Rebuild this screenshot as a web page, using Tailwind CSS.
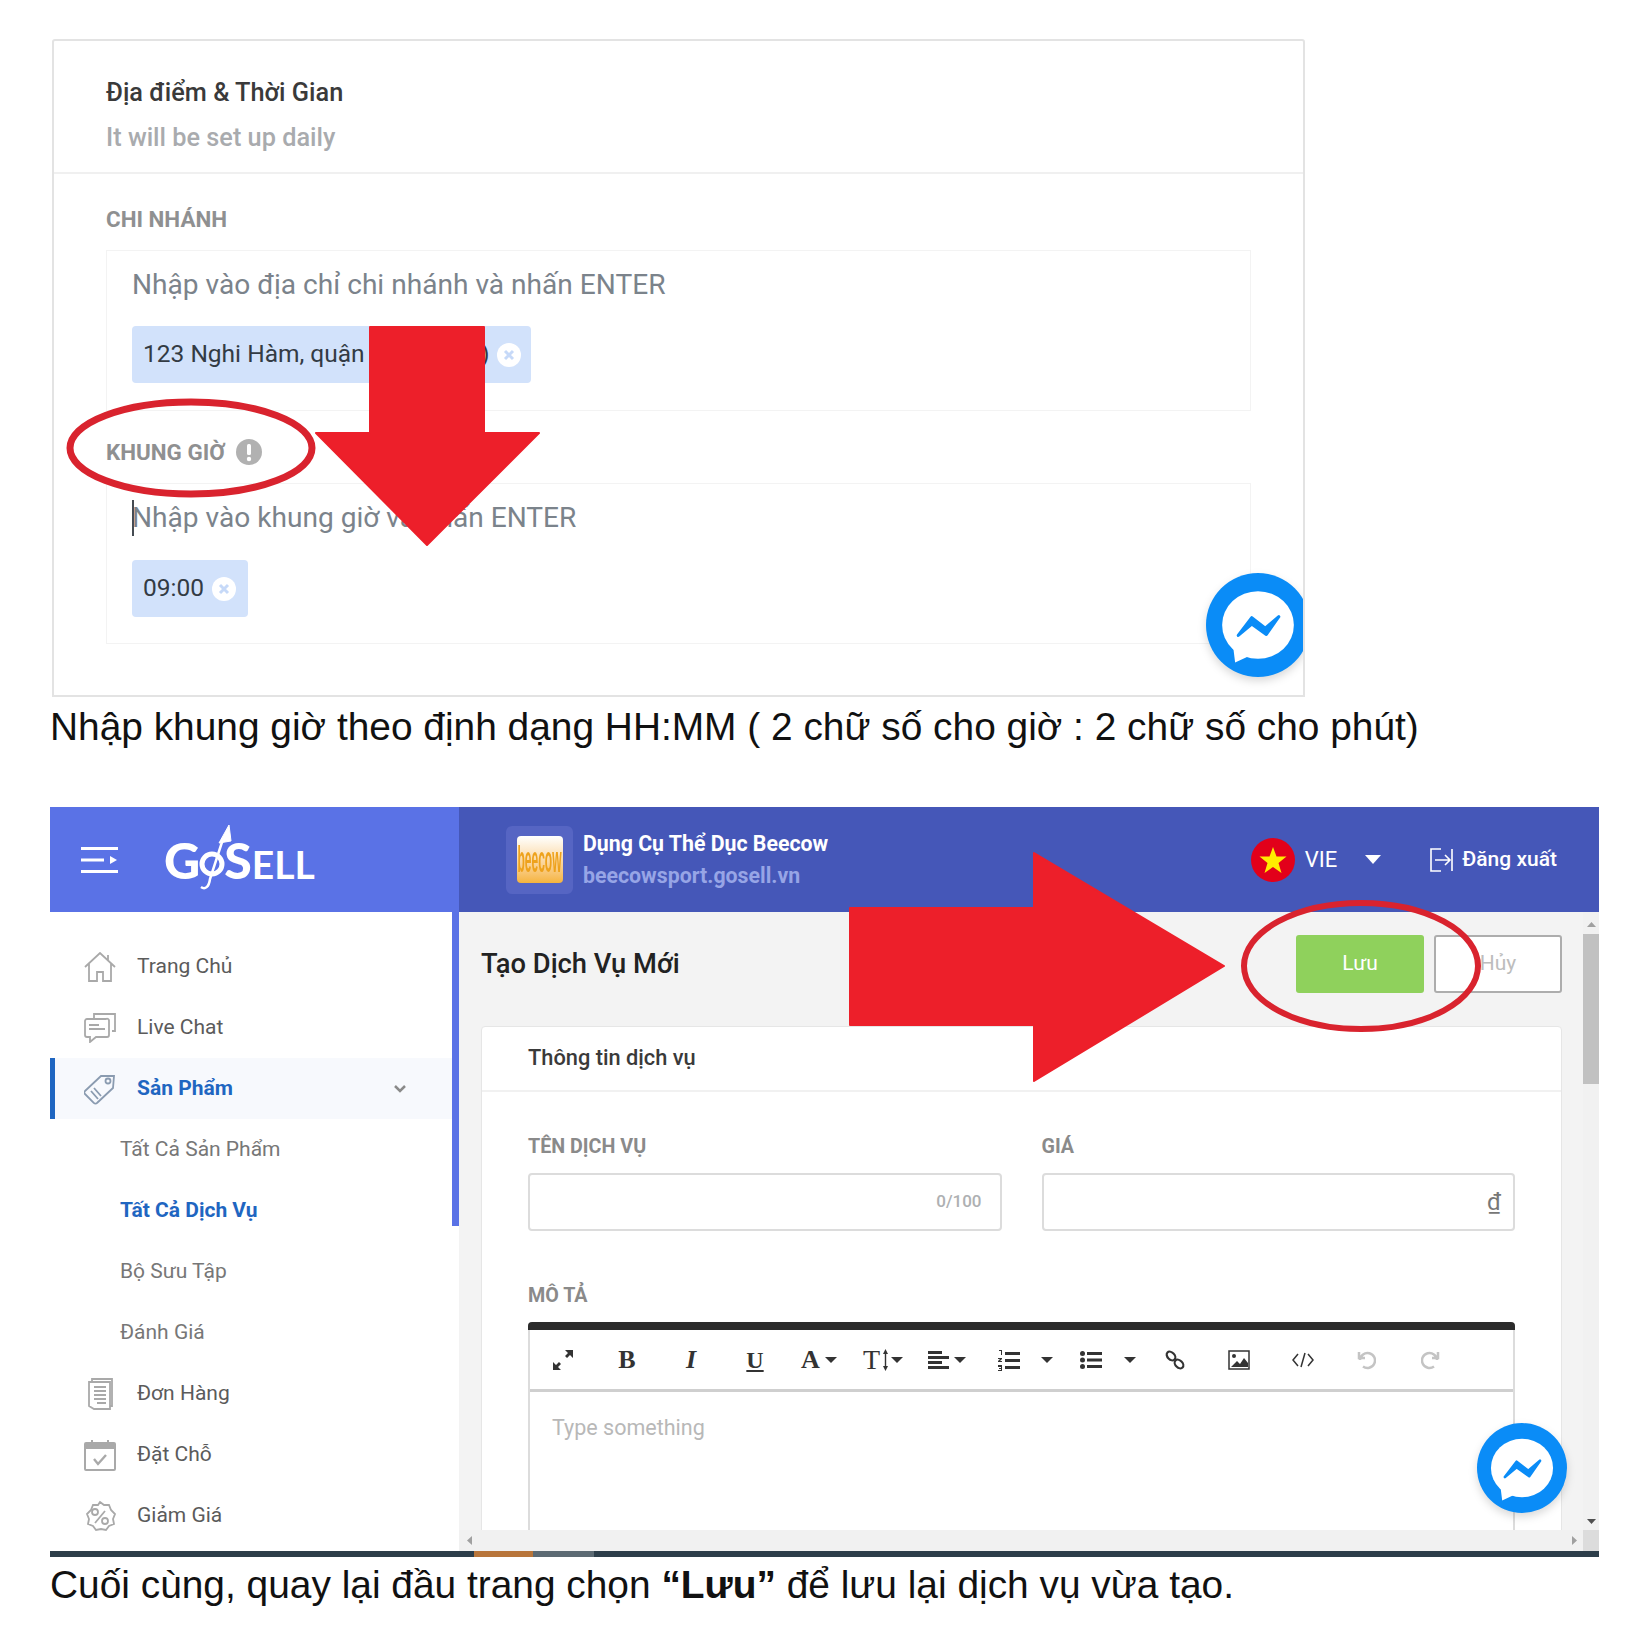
<!DOCTYPE html>
<html lang="en">
<head>
    <meta charset="UTF-8">
    <meta name="viewport" content="width=device-width, initial-scale=1.0">
    <title>Tạo Dịch Vụ Mới</title>
    <script src="https://cdn.jsdelivr.net/npm/@tailwindcss/browser@4"></script>
</head>
<body class="bg-white [font-family:Roboto,sans-serif]">
<div class="relative w-[1651px] h-[1633px] overflow-hidden pt-[39px]">

    <!-- Location and time card -->
    <section class="relative ml-[52px] w-[1253px] h-[658px] border-2 border-[#e3e3e3] rounded-t-[3px] overflow-hidden">
        <div class="h-[133px] border-b-2 border-[#f0f0f0] pl-[52px] pt-[36px]">
            <h2 class="text-[25.3px] leading-[32px] font-medium text-[#3a3a3a]">Địa điểm &amp; Thời Gian</h2>
            <p class="mt-[13px] text-[25.3px] leading-[32px] font-medium text-[#a9abae]">It will be set up daily</p>
        </div>
        <div class="pl-[52px] pr-[52px] pt-[30px]">
            <h3 class="text-[22.4px] leading-[30px] font-bold text-[#8f9091]">CHI NHÁNH</h3>
            <div class="mt-[16px] h-[161px] border border-[#f3f3f3] pl-[25px] pt-[16px]">
                <p class="text-[28.1px] leading-[36px] text-[#7b838b]">Nhập vào địa chỉ chi nhánh và nhấn ENTER</p>
                <div class="mt-[23px] w-[399px] h-[57px] bg-[#d2e2fb] rounded-[4px] flex items-center pl-[11px] text-[24.5px] text-[#333b44] whitespace-nowrap">
                    <span>123 Nghi Hàm, quận</span><span class="w-[125px] text-right">)</span>
                    <span class="ml-[7px] w-[24px] h-[24px] rounded-full bg-white flex items-center justify-center">
                        <svg width="12" height="12" viewBox="0 0 12 12"><path d="M2 2l8 8M10 2l-8 8" stroke="#c6d9f8" stroke-width="3"/></svg>
                    </span>
                </div>
            </div>
            <h3 class="mt-[26px] flex items-center text-[22.4px] leading-[30px] font-bold text-[#8f9091]">KHUNG GIỜ
                <svg class="ml-[11px]" width="26" height="26" viewBox="0 0 26 26"><circle cx="13" cy="13" r="13" fill="#b1b1b1"/><rect x="11" y="5" width="4" height="11" rx="1.5" fill="#fff"/><circle cx="13" cy="20" r="2.2" fill="#fff"/></svg>
            </h3>
            <div class="mt-[16px] h-[161px] border border-[#f3f3f3] pl-[25px] pt-[16px]">
                <p class="text-[28.1px] leading-[36px] text-[#7b838b] shadow-[inset_2px_0_0_#454b52]">Nhập vào khung giờ và nhấn ENTER</p>
                <div class="mt-[24px] w-[116px] h-[57px] bg-[#d2e2fb] rounded-[4px] flex items-center pl-[11px] text-[24.5px] text-[#333b44]">
                    <span>09:00</span>
                    <span class="ml-[8px] w-[24px] h-[24px] rounded-full bg-white flex items-center justify-center">
                        <svg width="12" height="12" viewBox="0 0 12 12"><path d="M2 2l8 8M10 2l-8 8" stroke="#c6d9f8" stroke-width="3"/></svg>
                    </span>
                </div>
            </div>
        </div>
        <!-- Messenger bubble, cut off by the card edge -->
        <svg class="absolute left-[1152px] top-[532px] drop-shadow-lg" width="104" height="104" viewBox="0 0 100 100">
            <circle cx="50" cy="50" r="50" fill="#0a8cf7"/>
            <ellipse cx="50" cy="50" rx="34.5" ry="32.5" fill="#fff"/>
            <path d="M26 70L28 86L41 80Z" fill="#fff"/>
            <path d="M31 60L44 43L57 53L70 42L58 59L44 49Z" fill="#0a8cf7" stroke="#0a8cf7" stroke-width="3" stroke-linejoin="round"/>
        </svg>
    </section>
    <p class="ml-[50px] mt-[8px] h-[44px] text-[38.87px] leading-[44px] whitespace-nowrap text-[#111] [font-family:'Liberation_Sans',Arial,sans-serif]">Nhập khung giờ theo định dạng HH:MM ( 2 chữ số cho giờ : 2 chữ số cho phút)</p>

    <!-- GoSell app screenshot -->
    <section class="relative ml-[50px] mt-[58px] w-[1549px] h-[750px] flex flex-col overflow-hidden">
        <header class="h-[105px] flex shrink-0">
            <div class="w-[409px] bg-[#5a72e6] flex items-center pl-[31px]">
                <svg width="37" height="26" viewBox="0 0 37 26" fill="#fff">
                    <rect y="0" width="37" height="3"/><rect y="11.500" width="23" height="3"/><path d="M29 9l7 4-7 4z"/><rect y="23" width="37" height="3"/>
                </svg>
                <div class="ml-[46px] flex items-baseline text-white font-black [font-family:Lato,sans-serif] leading-none">
                    <span class="text-[50px]">G</span>
                    <svg class="w-[24px] h-[30px] overflow-visible" viewBox="0 0 24 30" fill="none" stroke="#fff">
                        <circle cx="12" cy="15" r="10" stroke-width="5"/>
                        <path d="M1 38C5 41 9 38 10 30L23 -10" stroke-width="2.500"/>
                        <path d="M19 -6L29 -24L31 -8Z" fill="#fff" stroke-width="1"/>
                    </svg>
                    <span class="text-[50px]">S</span><span class="text-[39px] font-bold">ELL</span>
                </div>
            </div>
            <div class="flex-1 bg-[#4557b8] flex items-center pl-[47px] pr-[42px] text-white">
                <div class="w-[67px] h-[68px] rounded-[6px] bg-[#5665c3] flex items-center justify-center">
                    <div class="w-[46px] h-[47px] rounded-[4px] bg-gradient-to-b from-white to-[#f5b43a] overflow-hidden flex items-center justify-center">
                        <span class="text-[12px] font-bold text-[#eea21c] scale-y-[3] [font-family:'Liberation_Sans',sans-serif]">beecow</span>
                    </div>
                </div>
                <div class="ml-[10px] font-bold">
                    <p class="text-[21.3px] leading-[28px]">Dụng Cụ Thể Dục Beecow</p>
                    <p class="mt-[4px] text-[21.3px] leading-[28px] text-[#97a5e6]">beecowsport.gosell.vn</p>
                </div>
                <svg class="ml-auto" width="44" height="44" viewBox="0 0 44 44"><circle cx="22" cy="22" r="22" fill="#e2001a"/><path d="M22 9l3.500 9.500h10l-8 6.500 3 10-8.500-6-8.500 6 3-10-8-6.500h10z" fill="#ffec00"/></svg>
                <span class="ml-[10px] text-[22px]">VIE</span>
                <svg class="ml-[28px]" width="16" height="9" viewBox="0 0 16 9" fill="#fff"><path d="M0 0h16l-8 9z"/></svg>
                <svg class="ml-[49px]" width="23" height="24" viewBox="0 0 23 24" fill="none" stroke="#fff" stroke-width="1.600"><path d="M11 1H1v22h10M5 12h15M15 7l5 5-5 5M22 1v22"/></svg>
                <span class="ml-[9px] text-[21px] font-medium">Đăng xuất</span>
            </div>
        </header>

        <div class="flex-1 flex min-h-0">
            <!-- Sidebar -->
            <aside class="relative w-[409px] bg-white pt-[24px] shrink-0 text-[21px] text-[#5b5b5b]">
                <div class="absolute right-0 top-0 w-[7px] h-[314px] bg-[#5a72e6]"></div>
                <div class="h-[61px] flex items-center pl-[34px]">
                    <svg class="w-[32px] mr-[21px]" height="30" viewBox="0 0 32 30" fill="none" stroke="#a9a9a9" stroke-width="1.800"><path d="M1 15L16 1l15 14M5 12v17h8v-9h6v9h8V12M24 3v5"/></svg>Trang Chủ</div>
                <div class="h-[61px] flex items-center pl-[34px]">
                    <svg class="w-[32px] mr-[21px]" height="30" viewBox="0 0 32 30" fill="none" stroke="#a9a9a9" stroke-width="1.800"><path d="M10 6V1h21v17h-3M22 6H3a2 2 0 0 0-2 2v14a2 2 0 0 0 2 2h3v5l6-5h11a2 2 0 0 0 2-2V8a2 2 0 0 0-3-2zM5 12h10M5 16h16"/></svg>Live Chat</div>
                <div class="h-[61px] flex items-center pl-[29px] pr-[46px] border-l-[5px] border-[#1f66c1] bg-[#f7f9fd] mr-[7px] font-bold text-[#1f66c1]">
                    <svg class="w-[32px] mr-[21px]" height="32" viewBox="0 0 32 32" fill="none" stroke="#8a9bb0" stroke-width="1.800"><path d="M17 3L1 18a2 2 0 0 0 0 3l9 9a2 2 0 0 0 3 0l16-15 1-12zM7 18l7 8M10 15l7 8"/><circle cx="24" cy="8" r="2.500"/></svg>
                    <span>Sản Phẩm</span>
                    <svg class="ml-auto" width="12" height="8" viewBox="0 0 12 8" fill="none" stroke="#8a8a8a" stroke-width="2.500"><path d="M1 1l5 5 5-5"/></svg>
                </div>
                <div class="h-[61px] flex items-center pl-[70px] text-[#777]">Tất Cả Sản Phẩm</div>
                <div class="h-[61px] flex items-center pl-[70px] font-bold text-[#1f66c1]">Tất Cả Dịch Vụ</div>
                <div class="h-[61px] flex items-center pl-[70px] text-[#777]">Bộ Sưu Tập</div>
                <div class="h-[61px] flex items-center pl-[70px] text-[#777]">Đánh Giá</div>
                <div class="h-[61px] flex items-center pl-[34px]">
                    <svg class="w-[32px] mr-[21px]" height="32" viewBox="0 0 32 32" fill="none" stroke="#a9a9a9" stroke-width="1.800"><path d="M8 4V1h20v27h-2M8 4h18v27H10l-5-3V4zM10 9h12M10 13h12M10 17h12M10 21h12M13 25h9"/></svg>Đơn Hàng</div>
                <div class="h-[61px] flex items-center pl-[34px]">
                    <svg class="w-[32px] mr-[21px]" height="32" viewBox="0 0 32 32"><rect x="1" y="4" width="30" height="27" rx="1" fill="none" stroke="#a9a9a9" stroke-width="2"/><rect x="1" y="4" width="30" height="6" fill="#a9a9a9"/><path d="M8 1v6M24 1v6" stroke="#a9a9a9" stroke-width="2"/><path d="M10 20l4 5 8-9" fill="none" stroke="#a9a9a9" stroke-width="2.400"/></svg>Đặt Chỗ</div>
                <div class="h-[61px] flex items-center pl-[34px]">
                    <svg class="w-[32px] mr-[21px]" height="32" viewBox="0 0 32 32" fill="none" stroke="#a9a9a9" stroke-width="1.800"><path d="M16 2l4 3 5 0 2 5 4 4-2 5 1 5-5 2-3 4-5-1-5 1-3-4-5-2 1-5-2-5 4-4 2-5 5 0z"/><path d="M21 11L11 23"/><circle cx="11" cy="12" r="3"/><circle cx="21" cy="21" r="3"/></svg>Giảm Giá</div>
            </aside>

            <!-- Main content -->
            <main class="flex-1 flex flex-col min-w-0 bg-[#f3f3f3]">
                <div class="flex-1 flex min-h-0">
                    <div class="flex-1 min-w-0 overflow-hidden pl-[22px] pr-[21px] pt-[23px]">
                        <div class="h-[58px] flex items-center">
                            <h1 class="text-[27.3px] font-medium text-[#222]">Tạo Dịch Vụ Mới</h1>
                            <button class="ml-auto w-[128px] h-[58px] rounded-[3px] bg-[#8fd15c] text-white text-[21px]">Lưu</button>
                            <button class="ml-[10px] w-[128px] h-[58px] rounded-[3px] bg-white border-2 border-[#adadad] text-[#bdbdbd] text-[21px]">Hủy</button>
                        </div>
                        <div class="mt-[33px] bg-white border border-[#e6e6e6] rounded-t-[4px] h-[520px]">
                            <div class="h-[65px] border-b-2 border-[#f1f1f1] pl-[46px] flex items-center text-[21.8px] font-medium text-[#3a3a3a]">Thông tin dịch vụ</div>
                            <div class="px-[46px] pt-[43px]">
                                <div class="grid grid-cols-2 gap-[40px]">
                                    <div>
                                        <label class="block text-[19.7px] leading-[24px] font-bold text-[#8a8a8a]">TÊN DỊCH VỤ</label>
                                        <div class="mt-[14px] h-[58px] border-2 border-[#dcdcdc] rounded-[4px] flex items-center justify-end pr-[18px] text-[17px] font-medium text-[#aeb0b2]">0/100</div>
                                    </div>
                                    <div>
                                        <label class="block text-[19.7px] leading-[24px] font-bold text-[#8a8a8a]">GIÁ</label>
                                        <div class="mt-[14px] h-[58px] border-2 border-[#dcdcdc] rounded-[4px] flex items-center justify-end pr-[12px] text-[24px] text-[#777]">₫</div>
                                    </div>
                                </div>
                                <label class="block mt-[53px] text-[19.7px] leading-[24px] font-bold text-[#8a8a8a]">MÔ TẢ</label>
                                <div class="mt-[14px] h-[300px] border-x-2 border-[#dcdcdc] rounded-t-[4px]">
                                    <div class="-mx-[2px] h-[8px] rounded-t-[4px] bg-[#2b2b2b]"></div>
                                    <!-- Editor toolbar -->
                                    <div class="h-[62px] pl-[1px] border-b-[3px] border-[#cfcfcf] flex items-center text-[#333] [font-family:'Liberation_Serif',serif]">
                                        <span class="w-[64px] flex justify-center"><svg width="22" height="22" viewBox="0 0 22 22" fill="#333"><path d="M13 1h8v8l-3-3-3 3-2-2 3-3zM1 21v-8l3 3 3-3 2 2-3 3 3 3z"/></svg></span>
                                        <b class="w-[64px] text-center text-[26px] leading-none">B</b>
                                        <i class="w-[64px] text-center text-[26px] leading-none font-bold">I</i>
                                        <u class="w-[64px] text-center text-[24px] leading-none font-bold">U</u>
                                        <span class="w-[64px] flex items-center justify-center gap-[5px] text-[26px] font-bold leading-none">A<svg width="12" height="6" viewBox="0 0 12 6" fill="#333"><path d="M0 0h12L6 6z"/></svg></span>
                                        <span class="w-[64px] flex items-center justify-center gap-[3px] leading-none"><span class="text-[28px]">T</span><svg width="5" height="22" viewBox="0 0 5 22" fill="#333"><path d="M2.500 0L5 5H3.200v12H5l-2.500 5L0 17h1.800V5H0z"/></svg><svg width="12" height="6" viewBox="0 0 12 6" fill="#333"><path d="M0 0h12L6 6z"/></svg></span>
                                        <span class="w-[64px] flex items-center justify-center gap-[5px]"><svg width="21" height="18" viewBox="0 0 21 18" fill="#333"><path d="M0 0h14v3H0zM0 5h21v3H0zM0 10h14v3H0zM0 15h21v3H0z"/></svg><svg width="12" height="6" viewBox="0 0 12 6" fill="#333"><path d="M0 0h12L6 6z"/></svg></span>
                                        <span class="w-[60px] flex justify-center"><svg width="22" height="22" viewBox="0 0 22 22" fill="#333"><path d="M7 3h15v3H7zM7 10h15v3H7zM7 17h15v3H7zM1 1h3v5H3V2H1zM0 9h4v1L2 12h2v1H0v-1l2-2H0zM0 16h4v6H0v-1h3v-1H1v-1h2v-1H0z"/></svg></span>
                                        <span class="w-[16px] flex justify-center"><svg width="12" height="6" viewBox="0 0 12 6" fill="#333"><path d="M0 0h12L6 6z"/></svg></span>
                                        <span class="ml-[5px] w-[62px] flex justify-center"><svg width="22" height="18" viewBox="0 0 22 18" fill="#333"><circle cx="2.500" cy="2.500" r="2.500"/><circle cx="2.500" cy="9" r="2.500"/><circle cx="2.500" cy="15.500" r="2.500"/><path d="M7 1h15v3H7zM7 7.500h15v3H7zM7 14h15v3H7z"/></svg></span>
                                        <span class="w-[16px] flex justify-center"><svg width="12" height="6" viewBox="0 0 12 6" fill="#333"><path d="M0 0h12L6 6z"/></svg></span>
                                        <span class="ml-[5px] w-[64px] flex justify-center"><svg width="20" height="20" viewBox="0 0 20 20" fill="none" stroke="#333" stroke-width="2.200"><ellipse cx="6" cy="6" rx="5" ry="3.500" transform="rotate(45 6 6)"/><ellipse cx="14" cy="14" rx="5" ry="3.500" transform="rotate(45 14 14)"/></svg></span>
                                        <span class="w-[64px] flex justify-center"><svg width="22" height="20" viewBox="0 0 22 20"><rect x="1" y="1" width="20" height="18" fill="none" stroke="#333" stroke-width="1.500"/><circle cx="6" cy="6" r="2" fill="#333"/><path d="M3 17l6-6 3 3 4-6 4 5v4z" fill="#333"/></svg></span>
                                        <span class="w-[63px] flex justify-center"><svg width="22" height="16" viewBox="0 0 22 16" fill="none" stroke="#333" stroke-width="1.500"><path d="M6 2L1 8l5 6M16 2l5 6-5 6M13 1l-4 14"/></svg></span>
                                        <span class="w-[64px] flex justify-center"><svg width="19" height="20" viewBox="0 0 19 20" fill="none" stroke="#c4c4c4" stroke-width="2.500"><path d="M3 10a7.500 7.500 0 1 1 3 6.500M2 2v6h6"/></svg></span>
                                        <span class="w-[64px] flex justify-center"><svg width="19" height="20" viewBox="0 0 19 20" fill="none" stroke="#c4c4c4" stroke-width="2.500"><path d="M16 10a7.500 7.500 0 1 0-3 6.500M17 2v6h-6"/></svg></span>
                                    </div>
                                    <p class="pl-[22px] pt-[22px] text-[21.5px] leading-[28px] text-[#b8b8b8]">Type something</p>
                                </div>
                            </div>
                        </div>
                    </div>
                    <!-- Vertical scrollbar -->
                    <div class="w-[16px] bg-[#f1f1f1] flex flex-col items-center pt-[10px] pb-[6px]">
                        <svg width="9" height="5" viewBox="0 0 9 5" fill="#a0a0a0"><path d="M0 5h9L4.500 0z"/></svg>
                        <div class="mt-[7px] w-full h-[150px] bg-[#c1c1c1]"></div>
                        <svg class="mt-auto" width="9" height="5" viewBox="0 0 9 5" fill="#505050"><path d="M0 0h9L4.500 5z"/></svg>
                    </div>
                </div>
                <!-- Horizontal scrollbar -->
                <div class="h-[21px] shrink-0 bg-[#f1f1f1] flex items-center pl-[8px] pr-[16px] relative">
                    <svg width="5" height="9" viewBox="0 0 5 9" fill="#a0a0a0"><path d="M5 0v9L0 4.500z"/></svg>
                    <svg class="ml-auto mr-[6px]" width="5" height="9" viewBox="0 0 5 9" fill="#a0a0a0"><path d="M0 0v9l5-4.500z"/></svg>
                    <div class="absolute right-0 top-0 bottom-0 w-[16px] bg-[#dcdcdc]"></div>
                </div>
            </main>
        </div>

        <!-- Taskbar sliver at the bottom edge -->
        <div class="h-[6px] shrink-0 bg-[#2d3e4a] flex">
            <div class="ml-[424px] w-[59px] bg-[#b8753a]"></div>
            <div class="w-[61px] bg-[#5c6a73]"></div>
        </div>

        <!-- Messenger bubble -->
        <svg class="absolute left-[1427px] top-[616px] drop-shadow-lg" width="90" height="90" viewBox="0 0 100 100">
            <circle cx="50" cy="50" r="50" fill="#0a8cf7"/>
            <ellipse cx="50" cy="50" rx="34.5" ry="32.5" fill="#fff"/>
            <path d="M26 70L28 86L41 80Z" fill="#fff"/>
            <path d="M31 60L44 43L57 53L70 42L58 59L44 49Z" fill="#0a8cf7" stroke="#0a8cf7" stroke-width="3" stroke-linejoin="round"/>
        </svg>
    </section>
    <p class="ml-[50px] mt-[6px] h-[44px] text-[38.87px] leading-[44px] whitespace-nowrap text-[#111] [font-family:'Liberation_Sans',Arial,sans-serif]">Cuối cùng, quay lại đầu trang chọn <b>“Lưu”</b> để lưu lại dịch vụ vừa tạo.</p>

    <!-- Red annotations drawn on top of the page -->
    <svg class="absolute inset-0 pointer-events-none" width="1651" height="1633" viewBox="0 0 1651 1633">
        <path d="M370 327H484V433H539L427 545L316 433H370Z" fill="#ed1f2a" stroke="#ed1f2a" stroke-width="2" stroke-linejoin="round"/>
        <ellipse cx="191" cy="448" rx="121" ry="46" fill="none" stroke="#d9232e" stroke-width="7"/>
        <path d="M850 908H1034V853L1224 966L1034 1081V1025H850Z" fill="#ed1f2a" stroke="#ed1f2a" stroke-width="2" stroke-linejoin="round"/>
        <ellipse cx="1361" cy="966" rx="117" ry="63" fill="none" stroke="#d9232e" stroke-width="6"/>
    </svg>
</div>
</body>
</html>
